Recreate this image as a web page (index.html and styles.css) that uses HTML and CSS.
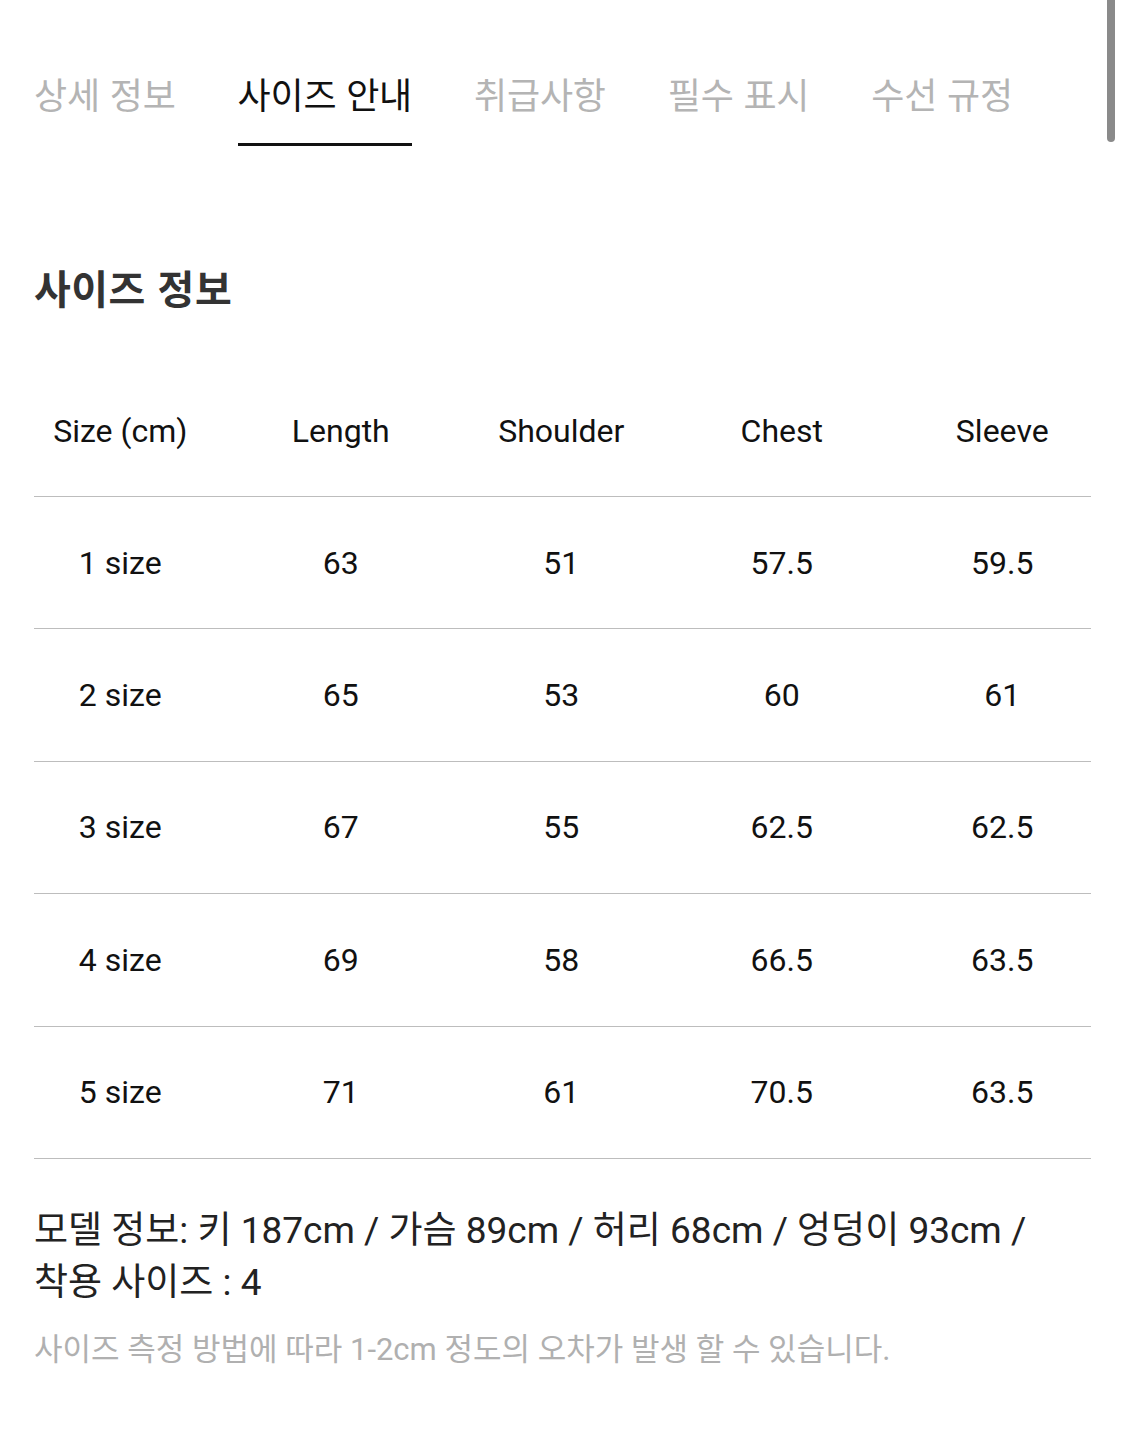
FILE: index.html
```html
<!DOCTYPE html>
<html lang="ko">
<head>
<meta charset="utf-8">
<link rel="stylesheet" href="styles.css">
</head>
<body>
<div class="scrollbar"></div>
<div class="page">
  <nav class="tabs">
    <div class="tab">상세 정보</div>
    <div class="tab active">사이즈 안내</div>
    <div class="tab">취급사항</div>
    <div class="tab">필수 표시</div>
    <div class="tab">수선 규정</div>
  </nav>

  <h2 class="title">사이즈 정보</h2>

  <div class="table">
    <div class="row head"><div class="cells"><span>Size (cm)</span><span>Length</span><span>Shoulder</span><span>Chest</span><span>Sleeve</span></div></div>
    <div class="row"><div class="cells"><span>1 size</span><span>63</span><span>51</span><span>57.5</span><span>59.5</span></div></div>
    <div class="row"><div class="cells"><span>2 size</span><span>65</span><span>53</span><span>60</span><span>61</span></div></div>
    <div class="row"><div class="cells"><span>3 size</span><span>67</span><span>55</span><span>62.5</span><span>62.5</span></div></div>
    <div class="row"><div class="cells"><span>4 size</span><span>69</span><span>58</span><span>66.5</span><span>63.5</span></div></div>
    <div class="row"><div class="cells"><span>5 size</span><span>71</span><span>61</span><span>70.5</span><span>63.5</span></div></div>
  </div>

  <p class="model">모델 정보: 키 187cm / 가슴 89cm / 허리 68cm / 엉덩이 93cm /<br>착용 사이즈 : 4</p>
  <p class="note">사이즈 측정 방법에 따라 1-2cm 정도의 오차가 발생 할 수 있습니다.</p>
</div>
</body>
</html>
```

FILE: styles.css
```css
html, body {
  margin: 0;
  padding: 0;
  background: #fff;
}
body {
  font-family: "Roboto", "Noto Sans CJK KR", sans-serif;
  color: #111;
  width: 1125px;
  height: 1452px;
  overflow: hidden;
  position: relative;
}
.scrollbar {
  position: absolute;
  top: -10px;
  left: 1107px;
  width: 8px;
  height: 152px;
  background: #8a8a8a;
  border-radius: 4px;
}
.page {
  padding: 0 34px;
}
.tabs {
  display: flex;
  gap: 62px;
  padding-top: 68px;
}
.tab {
  font-family: "Noto Sans CJK KR", sans-serif;
  font-size: 36px;
  line-height: 50px;
  color: #b4b4b4;
  padding-bottom: 25px;
  border-bottom: 3px solid transparent;
  letter-spacing: -0.2px;
}
.tab.active {
  color: #111;
  border-bottom-color: #111;
}
.title {
  margin: 113px 0 0;
  font-family: "Noto Sans CJK KR", sans-serif;
  font-size: 40px;
  font-weight: 700;
  line-height: 56px;
  color: #333;
  letter-spacing: 0.5px;
}
.table {
  margin-top: 90px;
}
.row {
  box-sizing: border-box;
  border-bottom: 1.5px solid #bdbdbd;
  height: 132.4px;
}
.row.head {
  height: 92px;
}
.cells {
  margin: 0 -24px;
  display: grid;
  grid-template-columns: repeat(5, 220.5px);
  height: 100%;
  align-items: center;
}
.row.head .cells {
  align-items: start;
}
.cells span {
  text-align: center;
  font-size: 32px;
  line-height: 44px;
  color: #111;
  letter-spacing: 0;
}
.row.head .cells span {
  line-height: 52px;
}
.model {
  margin: 46px 0 0;
  font-family: "Roboto", "Noto Sans CJK KR", sans-serif;
  font-size: 37px;
  line-height: 52px;
  color: #222;
  letter-spacing: 0;
}
.note {
  margin: 19px 0 0;
  font-family: "Roboto", "Noto Sans CJK KR", sans-serif;
  font-size: 31px;
  line-height: 44px;
  color: #b0b0b0;
  letter-spacing: 0;
}
```
